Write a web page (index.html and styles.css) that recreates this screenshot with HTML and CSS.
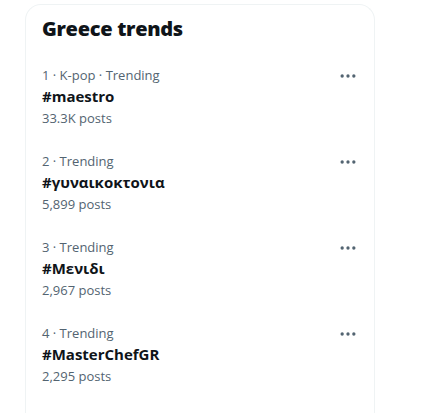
FILE: index.html
```html
<!DOCTYPE html>
<html>
<head>
<meta charset="utf-8">
<link rel="stylesheet" href="styles.css">
</head>
<body>
<section class="card">
  <h2 class="title">Greece trends</h2>
  <div class="trend">
    <div class="info">
      <div class="meta">1 · K-pop · Trending</div>
      <div class="tag">#maestro</div>
      <div class="meta posts">33.3K posts</div>
    </div>
    <span class="more"><svg viewBox="0 0 24 24" width="20" height="20"><circle cx="5" cy="12" r="2"/><circle cx="12" cy="12" r="2"/><circle cx="19" cy="12" r="2"/></svg></span>
  </div>
  <div class="trend">
    <div class="info">
      <div class="meta">2 · Trending</div>
      <div class="tag">#γυναικοκτονια</div>
      <div class="meta posts">5,899 posts</div>
    </div>
    <span class="more"><svg viewBox="0 0 24 24" width="20" height="20"><circle cx="5" cy="12" r="2"/><circle cx="12" cy="12" r="2"/><circle cx="19" cy="12" r="2"/></svg></span>
  </div>
  <div class="trend">
    <div class="info">
      <div class="meta">3 · Trending</div>
      <div class="tag">#Μενιδι</div>
      <div class="meta posts">2,967 posts</div>
    </div>
    <span class="more"><svg viewBox="0 0 24 24" width="20" height="20"><circle cx="5" cy="12" r="2"/><circle cx="12" cy="12" r="2"/><circle cx="19" cy="12" r="2"/></svg></span>
  </div>
  <div class="trend">
    <div class="info">
      <div class="meta">4 · Trending</div>
      <div class="tag">#MasterChefGR</div>
      <div class="meta posts">2,295 posts</div>
    </div>
    <span class="more"><svg viewBox="0 0 24 24" width="20" height="20"><circle cx="5" cy="12" r="2"/><circle cx="12" cy="12" r="2"/><circle cx="19" cy="12" r="2"/></svg></span>
  </div>
</section>
</body>
</html>
```

FILE: styles.css
```css
html, body {
  margin: 0;
  background: #ffffff;
}
body {
  padding: 4px 0 0 25px;
  font-family: "Open Sans", "Noto Sans", sans-serif;
  color: #0f1419;
}
.card {
  width: 348px;
  height: 409px;
  border: 1px solid #eff3f4;
  border-bottom: 0;
  border-radius: 16px 16px 0 0;
  box-sizing: border-box;
  width: 350px;
}
.title {
  margin: 0;
  padding: 12px 16px;
  font-size: 20px;
  line-height: 24px;
  font-weight: 800;
  letter-spacing: -0.3px;
}
.trend {
  display: flex;
  justify-content: space-between;
  align-items: flex-start;
  padding: 12px 16px 10px;
}
.info {
  display: flex;
  flex-direction: column;
}
.meta {
  font-size: 13px;
  line-height: 20px;
  color: #536471;
}
.posts {
  line-height: 22px;
}
.tag {
  font-size: 15px;
  line-height: 22px;
  font-weight: 700;
}
.more {
  display: flex;
  margin-top: 1px;
  fill: #536471;
}
```
